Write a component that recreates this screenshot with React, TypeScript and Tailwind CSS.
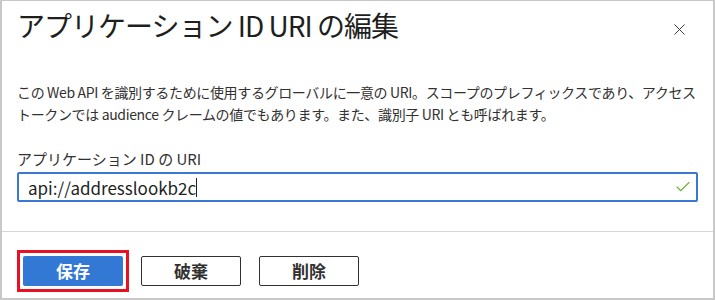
import { Check, X } from "lucide-react";

const font = { fontFamily: '"Noto Sans CJK JP", "Noto Sans", sans-serif' };

const App = () => {
  return (
    <div
      className="w-[715px] h-[300px] bg-white border-t border-l-2 border-r-2 border-b-2 border-[#c8c8c8] text-[#323130] flex flex-col"
      style={font}>
      {/* Header */}
      <div className="flex items-start justify-between pl-[15px] pr-[24px] pt-[6px] h-[80px]">
        <h1 className="text-[28px] leading-[36px] font-normal text-[#201f1e] tracking-[-1px]">
          アプリケーション ID URI の編集
        </h1>
        <X className="w-[19px] h-[19px] mt-[13px] text-[#323130]" strokeWidth={1.2} />
      </div>

      {/* Body */}
      <div className="px-[15px]">
        <p className="text-[14px] leading-[22px] tracking-[-0.35px] -mr-[8px]">
          この Web API を識別するために使用するグローバルに一意の URI。スコープのプレフィックスであり、アクセストークンでは audience クレームの値でもあります。また、識別子 URI とも呼ばれます。
        </p>
        <label className="block mt-[23px] text-[15px] leading-[22px]">
          アプリケーション ID の URI
        </label>
        <div className="mt-[2px] h-[30px] w-[681px] border-2 border-[#3b78d4] rounded-[2px] flex items-center justify-between pl-[9px] pr-[4px]">
          <span className="text-[17px] leading-none text-[#201f1e] flex items-center">
            api://addresslookb2c
            <span className="inline-block w-[1px] h-[19px] bg-[#201f1e]" />
          </span>
          <Check className="w-[18px] h-[18px] text-[#6bb33a]" strokeWidth={1.5} />
        </div>
      </div>

      {/* Footer */}
      <div className="mt-[29px] border-t border-[#d6d6d6]" />
      <div className="flex items-center pl-[15px] mt-[18px]">
        <div className="border-[3px] border-[#e81123] p-[3px]">
          <button className="w-[100px] h-[30px] rounded-[2px] bg-[#3278d4] text-white text-[17px] font-bold">
            保存
          </button>
        </div>
        <button className="ml-[12px] w-[100px] h-[30px] rounded-[2px] border border-[#323130] bg-white text-[17px] font-bold text-[#323130]">
          破棄
        </button>
        <button className="ml-[18px] w-[100px] h-[30px] rounded-[2px] border border-[#323130] bg-white text-[17px] font-bold text-[#323130]">
          削除
        </button>
      </div>
    </div>
  );
};

export default App;
